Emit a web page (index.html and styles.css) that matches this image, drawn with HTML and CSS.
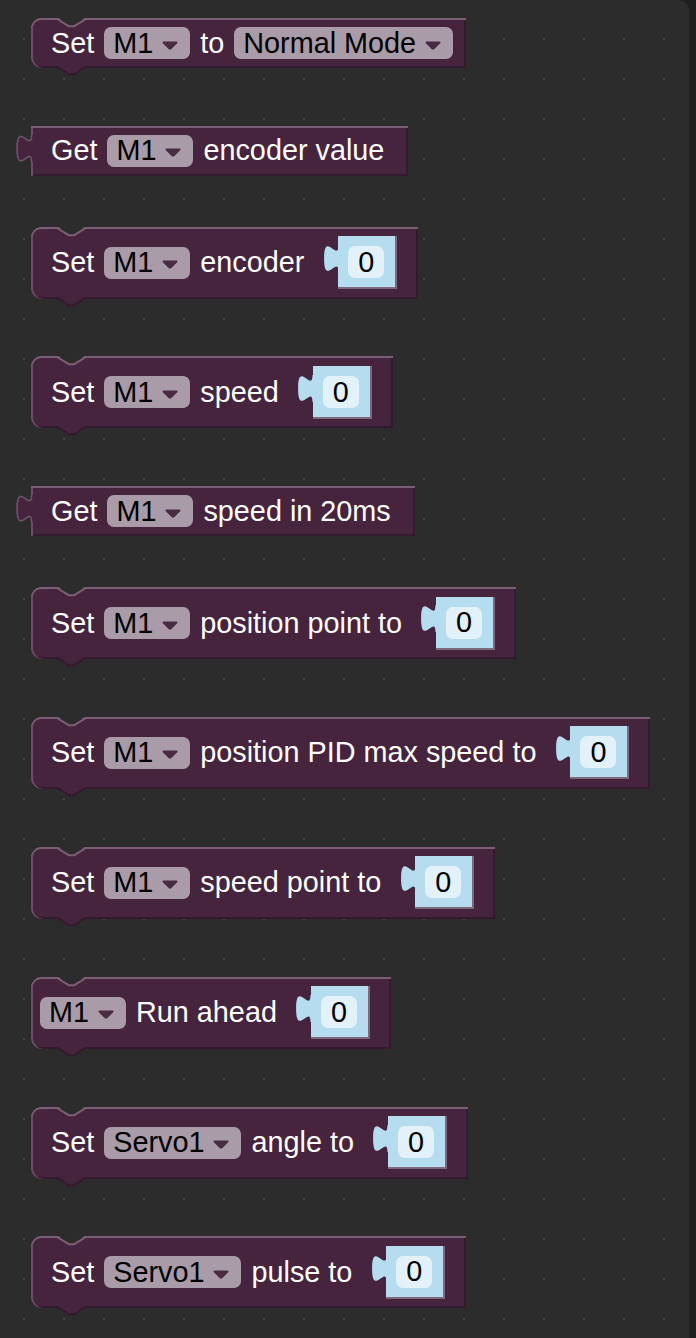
FILE: index.html
```html
<!DOCTYPE html>
<html>
<head>
<meta charset="utf-8">
<link rel="stylesheet" href="styles.css">
</head>
<body>
<div class="ws">

  <div class="block stmt end-field">
    <svg class="notch" viewBox="0 0 27 9"><polygon points="-1,-1 10.8,7.2 16.2,7.2 28,-1"/><polyline points="-1,1 10.8,8.2 16.2,8.2 28,1"/></svg>
    <span class="lbl">Set</span>
    <span class="dd"><span>M1</span><svg class="arr" viewBox="0 0 16 9"><path d="M1.5 0.5h13a1 1 0 0 1 0.7 1.7l-5.8 5.9a2 2 0 0 1-2.8 0l-5.8-5.9a1 1 0 0 1 0.7-1.7z"/></svg></span>
    <span class="lbl">to</span>
    <span class="dd"><span>Normal Mode</span><svg class="arr" viewBox="0 0 16 9"><path d="M1.5 0.5h13a1 1 0 0 1 0.7 1.7l-5.8 5.9a2 2 0 0 1-2.8 0l-5.8-5.9a1 1 0 0 1 0.7-1.7z"/></svg></span>
    <svg class="btab" viewBox="0 0 27 9.2"><polygon points="0,0 0,2 10.8,9.2 16.2,9.2 27,2 27,0"/><polyline points="0,1.2 10.8,8.2 16.2,8.2 27,1.2"/></svg>
  </div>

  <div class="block out">
    <svg class="otab" viewBox="-8.6 -0.6 10 17.2"><path class="f" d="M1.4,0 H0 c0,10 -8,-8.5 -8,7.5 s8,-2.5 8,7.5 H1.4 Z"/><path class="s" d="M0,0 c0,10 -8,-8.5 -8,7.5 s8,-2.5 8,7.5"/></svg>
    <span class="lbl">Get</span>
    <span class="dd"><span>M1</span><svg class="arr" viewBox="0 0 16 9"><path d="M1.5 0.5h13a1 1 0 0 1 0.7 1.7l-5.8 5.9a2 2 0 0 1-2.8 0l-5.8-5.9a1 1 0 0 1 0.7-1.7z"/></svg></span>
    <span class="lbl">encoder value</span>
  </div>

  <div class="block stmt tall">
    <svg class="notch" viewBox="0 0 27 9"><polygon points="-1,-1 10.8,7.2 16.2,7.2 28,-1"/><polyline points="-1,1 10.8,8.2 16.2,8.2 28,1"/></svg>
    <span class="lbl">Set</span>
    <span class="dd"><span>M1</span><svg class="arr" viewBox="0 0 16 9"><path d="M1.5 0.5h13a1 1 0 0 1 0.7 1.7l-5.8 5.9a2 2 0 0 1-2.8 0l-5.8-5.9a1 1 0 0 1 0.7-1.7z"/></svg></span>
    <span class="lbl">encoder</span>
    <span class="slot"><svg class="itab" viewBox="-8.6 -0.6 10 17.2"><path d="M1.4,0 H0 c0,10 -8,-8.5 -8,7.5 s8,-2.5 8,7.5 H1.4 Z"/></svg><span class="slot-body"><span class="num">0</span></span></span>
    <svg class="btab" viewBox="0 0 27 9.2"><polygon points="0,0 0,2 10.8,9.2 16.2,9.2 27,2 27,0"/><polyline points="0,1.2 10.8,8.2 16.2,8.2 27,1.2"/></svg>
  </div>

  <div class="block stmt tall">
    <svg class="notch" viewBox="0 0 27 9"><polygon points="-1,-1 10.8,7.2 16.2,7.2 28,-1"/><polyline points="-1,1 10.8,8.2 16.2,8.2 28,1"/></svg>
    <span class="lbl">Set</span>
    <span class="dd"><span>M1</span><svg class="arr" viewBox="0 0 16 9"><path d="M1.5 0.5h13a1 1 0 0 1 0.7 1.7l-5.8 5.9a2 2 0 0 1-2.8 0l-5.8-5.9a1 1 0 0 1 0.7-1.7z"/></svg></span>
    <span class="lbl">speed</span>
    <span class="slot"><svg class="itab" viewBox="-8.6 -0.6 10 17.2"><path d="M1.4,0 H0 c0,10 -8,-8.5 -8,7.5 s8,-2.5 8,7.5 H1.4 Z"/></svg><span class="slot-body"><span class="num">0</span></span></span>
    <svg class="btab" viewBox="0 0 27 9.2"><polygon points="0,0 0,2 10.8,9.2 16.2,9.2 27,2 27,0"/><polyline points="0,1.2 10.8,8.2 16.2,8.2 27,1.2"/></svg>
  </div>

  <div class="block out">
    <svg class="otab" viewBox="-8.6 -0.6 10 17.2"><path class="f" d="M1.4,0 H0 c0,10 -8,-8.5 -8,7.5 s8,-2.5 8,7.5 H1.4 Z"/><path class="s" d="M0,0 c0,10 -8,-8.5 -8,7.5 s8,-2.5 8,7.5"/></svg>
    <span class="lbl">Get</span>
    <span class="dd"><span>M1</span><svg class="arr" viewBox="0 0 16 9"><path d="M1.5 0.5h13a1 1 0 0 1 0.7 1.7l-5.8 5.9a2 2 0 0 1-2.8 0l-5.8-5.9a1 1 0 0 1 0.7-1.7z"/></svg></span>
    <span class="lbl">speed in 20ms</span>
  </div>

  <div class="block stmt tall">
    <svg class="notch" viewBox="0 0 27 9"><polygon points="-1,-1 10.8,7.2 16.2,7.2 28,-1"/><polyline points="-1,1 10.8,8.2 16.2,8.2 28,1"/></svg>
    <span class="lbl">Set</span>
    <span class="dd"><span>M1</span><svg class="arr" viewBox="0 0 16 9"><path d="M1.5 0.5h13a1 1 0 0 1 0.7 1.7l-5.8 5.9a2 2 0 0 1-2.8 0l-5.8-5.9a1 1 0 0 1 0.7-1.7z"/></svg></span>
    <span class="lbl">position point to</span>
    <span class="slot"><svg class="itab" viewBox="-8.6 -0.6 10 17.2"><path d="M1.4,0 H0 c0,10 -8,-8.5 -8,7.5 s8,-2.5 8,7.5 H1.4 Z"/></svg><span class="slot-body"><span class="num">0</span></span></span>
    <svg class="btab" viewBox="0 0 27 9.2"><polygon points="0,0 0,2 10.8,9.2 16.2,9.2 27,2 27,0"/><polyline points="0,1.2 10.8,8.2 16.2,8.2 27,1.2"/></svg>
  </div>

  <div class="block stmt tall">
    <svg class="notch" viewBox="0 0 27 9"><polygon points="-1,-1 10.8,7.2 16.2,7.2 28,-1"/><polyline points="-1,1 10.8,8.2 16.2,8.2 28,1"/></svg>
    <span class="lbl">Set</span>
    <span class="dd"><span>M1</span><svg class="arr" viewBox="0 0 16 9"><path d="M1.5 0.5h13a1 1 0 0 1 0.7 1.7l-5.8 5.9a2 2 0 0 1-2.8 0l-5.8-5.9a1 1 0 0 1 0.7-1.7z"/></svg></span>
    <span class="lbl">position PID max speed to</span>
    <span class="slot"><svg class="itab" viewBox="-8.6 -0.6 10 17.2"><path d="M1.4,0 H0 c0,10 -8,-8.5 -8,7.5 s8,-2.5 8,7.5 H1.4 Z"/></svg><span class="slot-body"><span class="num">0</span></span></span>
    <svg class="btab" viewBox="0 0 27 9.2"><polygon points="0,0 0,2 10.8,9.2 16.2,9.2 27,2 27,0"/><polyline points="0,1.2 10.8,8.2 16.2,8.2 27,1.2"/></svg>
  </div>

  <div class="block stmt tall">
    <svg class="notch" viewBox="0 0 27 9"><polygon points="-1,-1 10.8,7.2 16.2,7.2 28,-1"/><polyline points="-1,1 10.8,8.2 16.2,8.2 28,1"/></svg>
    <span class="lbl">Set</span>
    <span class="dd"><span>M1</span><svg class="arr" viewBox="0 0 16 9"><path d="M1.5 0.5h13a1 1 0 0 1 0.7 1.7l-5.8 5.9a2 2 0 0 1-2.8 0l-5.8-5.9a1 1 0 0 1 0.7-1.7z"/></svg></span>
    <span class="lbl">speed point to</span>
    <span class="slot"><svg class="itab" viewBox="-8.6 -0.6 10 17.2"><path d="M1.4,0 H0 c0,10 -8,-8.5 -8,7.5 s8,-2.5 8,7.5 H1.4 Z"/></svg><span class="slot-body"><span class="num">0</span></span></span>
    <svg class="btab" viewBox="0 0 27 9.2"><polygon points="0,0 0,2 10.8,9.2 16.2,9.2 27,2 27,0"/><polyline points="0,1.2 10.8,8.2 16.2,8.2 27,1.2"/></svg>
  </div>

  <div class="block stmt tall lead-field">
    <svg class="notch" viewBox="0 0 27 9"><polygon points="-1,-1 10.8,7.2 16.2,7.2 28,-1"/><polyline points="-1,1 10.8,8.2 16.2,8.2 28,1"/></svg>
    <span class="dd"><span>M1</span><svg class="arr" viewBox="0 0 16 9"><path d="M1.5 0.5h13a1 1 0 0 1 0.7 1.7l-5.8 5.9a2 2 0 0 1-2.8 0l-5.8-5.9a1 1 0 0 1 0.7-1.7z"/></svg></span>
    <span class="lbl">Run ahead</span>
    <span class="slot"><svg class="itab" viewBox="-8.6 -0.6 10 17.2"><path d="M1.4,0 H0 c0,10 -8,-8.5 -8,7.5 s8,-2.5 8,7.5 H1.4 Z"/></svg><span class="slot-body"><span class="num">0</span></span></span>
    <svg class="btab" viewBox="0 0 27 9.2"><polygon points="0,0 0,2 10.8,9.2 16.2,9.2 27,2 27,0"/><polyline points="0,1.2 10.8,8.2 16.2,8.2 27,1.2"/></svg>
  </div>

  <div class="block stmt tall">
    <svg class="notch" viewBox="0 0 27 9"><polygon points="-1,-1 10.8,7.2 16.2,7.2 28,-1"/><polyline points="-1,1 10.8,8.2 16.2,8.2 28,1"/></svg>
    <span class="lbl">Set</span>
    <span class="dd"><span>Servo1</span><svg class="arr" viewBox="0 0 16 9"><path d="M1.5 0.5h13a1 1 0 0 1 0.7 1.7l-5.8 5.9a2 2 0 0 1-2.8 0l-5.8-5.9a1 1 0 0 1 0.7-1.7z"/></svg></span>
    <span class="lbl">angle to</span>
    <span class="slot"><svg class="itab" viewBox="-8.6 -0.6 10 17.2"><path d="M1.4,0 H0 c0,10 -8,-8.5 -8,7.5 s8,-2.5 8,7.5 H1.4 Z"/></svg><span class="slot-body"><span class="num">0</span></span></span>
    <svg class="btab" viewBox="0 0 27 9.2"><polygon points="0,0 0,2 10.8,9.2 16.2,9.2 27,2 27,0"/><polyline points="0,1.2 10.8,8.2 16.2,8.2 27,1.2"/></svg>
  </div>

  <div class="block stmt tall">
    <svg class="notch" viewBox="0 0 27 9"><polygon points="-1,-1 10.8,7.2 16.2,7.2 28,-1"/><polyline points="-1,1 10.8,8.2 16.2,8.2 28,1"/></svg>
    <span class="lbl">Set</span>
    <span class="dd"><span>Servo1</span><svg class="arr" viewBox="0 0 16 9"><path d="M1.5 0.5h13a1 1 0 0 1 0.7 1.7l-5.8 5.9a2 2 0 0 1-2.8 0l-5.8-5.9a1 1 0 0 1 0.7-1.7z"/></svg></span>
    <span class="lbl">pulse to</span>
    <span class="slot"><svg class="itab" viewBox="-8.6 -0.6 10 17.2"><path d="M1.4,0 H0 c0,10 -8,-8.5 -8,7.5 s8,-2.5 8,7.5 H1.4 Z"/></svg><span class="slot-body"><span class="num">0</span></span></span>
    <svg class="btab" viewBox="0 0 27 9.2"><polygon points="0,0 0,2 10.8,9.2 16.2,9.2 27,2 27,0"/><polyline points="0,1.2 10.8,8.2 16.2,8.2 27,1.2"/></svg>
  </div>

</div>
</body>
</html>
```

FILE: styles.css
```css
* { box-sizing: border-box; }
html, body { margin: 0; padding: 0; }
body {
  background: #1f1f1f;
  font-family: "Liberation Sans", Arial, sans-serif;
  overflow: hidden;
  width: 696px;
  height: 1338px;
}
.ws {
  width: 689px;
  height: 1338px;
  background-color: #2c2c2c;
  background-image: radial-gradient(circle, #464646 0, #464646 1px, rgba(70,70,70,0) 1.4px);
  background-size: 40px 40px;
  background-position: 4px 19px;
  border-top-right-radius: 11px;
  padding: 18px 0 0 31px;
  display: flex;
  flex-direction: column;
  align-items: flex-start;
  gap: 50.7px;
}
.block {
  position: relative;
  display: flex;
  align-items: center;
  gap: 10px;
  height: 50px;
  padding: 0 21px 0 20px;
  background: #46243e;
  color: #fff;
  font-size: 28.8px;
  line-height: 1;
  white-space: nowrap;
  box-shadow: inset 0 2px 0 #7a5f74, inset 2px 0 0 #6a4f64, inset -2px -2px 0 #341a2f;
}
.stmt {
  border-radius: 11px 0 0 11px;
  margin-bottom: 7.2px;
}
.tall { height: 72px; }
.end-field { padding-right: 13px; }
.out { padding-right: 24px; }
.lead-field { padding-left: 9px; }
.lbl { display: block; }

.dd {
  display: flex;
  align-items: center;
  gap: 9px;
  height: 32px;
  padding: 0 12px 0 9px;
  background: #aa9ba8;
  border-radius: 7px;
  color: #000;
}
.arr {
  width: 16px;
  height: 9px;
  margin-top: 4px;
  fill: #4a2b44;
}

.slot {
  position: relative;
  display: flex;
  margin-left: 8px;
  padding-left: 16px;
}
.slot-body {
  display: flex;
  padding: 10px 11px 9px 10px;
  background: #b6dcef;
  border-right: 2px solid #7d697b;
  border-bottom: 2px solid #7d697b;
}
.num {
  display: flex;
  align-items: center;
  justify-content: center;
  width: 36px;
  height: 32px;
  background: #e2f1fa;
  border-radius: 7px;
  color: #000;
}
.itab {
  position: absolute;
  left: 0.5px;
  top: 7.9px;
  width: 18px;
  height: 30.96px;
  fill: #b6dcef;
}

.notch {
  position: absolute;
  left: 27px;
  top: 0;
  width: 27px;
  height: 9px;
  overflow: visible;
}
.notch polygon { fill: #2c2c2c; }
.notch polyline { fill: none; stroke: #7a5f74; stroke-width: 2; }

.btab {
  position: absolute;
  left: 27px;
  bottom: -7.2px;
  width: 27px;
  height: 9.2px;
  overflow: visible;
}
.btab polygon { fill: #46243e; }
.btab polyline { fill: none; stroke: #341a2f; stroke-width: 2; }

.otab {
  position: absolute;
  left: -15.5px;
  top: 7.9px;
  width: 18px;
  height: 30.96px;
  overflow: visible;
}
.otab .f { fill: #46243e; }
.otab .s { fill: none; stroke: #6a4f64; stroke-width: 1; }
```
